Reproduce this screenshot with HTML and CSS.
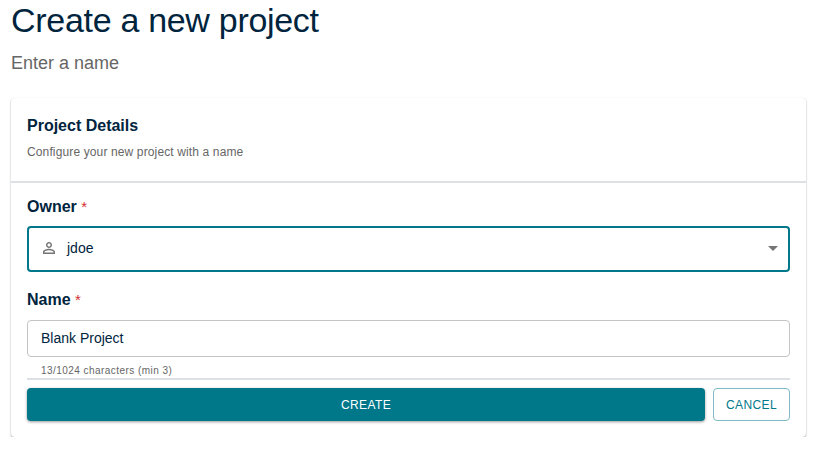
FILE: index.html
```html
<!DOCTYPE html>
<html lang="en">
<head>
    <meta charset="UTF-8">
    <meta name="viewport" content="width=device-width, initial-scale=1.0">
    <title>Create a new project</title>
    <link rel="stylesheet" href="styles.css">
</head>
<body>
    <h1 class="page-title">Create a new project</h1>
    <p class="page-subtitle">Enter a name</p>

    <div class="card">
        <div class="card-header">
            <h2 class="card-title">Project Details</h2>
            <p class="card-subtitle">Configure your new project with a name</p>
        </div>
        <form class="card-body">
            <label class="field-label">Owner <span class="required">*</span></label>
            <div class="select">
                <svg class="select-icon" viewBox="0 0 24 24" width="18" height="18">
                    <path fill="#757575" d="M12 5.9c1.16 0 2.1.94 2.1 2.1s-.94 2.1-2.1 2.1S9.9 9.16 9.9 8s.94-2.1 2.1-2.1m0 9c2.97 0 6.1 1.46 6.1 2.1v1.1H5.9V17c0-.64 3.13-2.1 6.1-2.1M12 4C9.79 4 8 5.79 8 8s1.79 4 4 4 4-1.79 4-4-1.79-4-4-4zm0 9c-2.67 0-8 1.34-8 4v3h16v-3c0-2.66-5.33-4-8-4z"/>
                </svg>
                <span class="select-value">jdoe</span>
                <span class="select-arrow"></span>
            </div>

            <label class="field-label field-label-name">Name <span class="required">*</span></label>
            <input type="text" class="text-input" value="Blank Project">
            <div class="helper">13/1024 characters (min 3)</div>

            <div class="actions">
                <button type="button" class="btn btn-create">CREATE</button>
                <button type="button" class="btn btn-cancel">CANCEL</button>
            </div>
        </form>
    </div>
</body>
</html>
```

FILE: styles.css
```css
* {
    margin: 0;
    padding: 0;
    box-sizing: border-box;
}

body {
    font-family: "Liberation Sans", Arial, sans-serif;
    background: #fff;
    color: #00243d;
    padding: 0 11px;
}

.page-title {
    font-size: 34px;
    font-weight: 400;
    line-height: 40px;
    letter-spacing: -0.3px;
}

.page-subtitle {
    font-size: 18px;
    line-height: 24px;
    margin-top: 11px;
    color: #666;
}

.card {
    margin-top: 23px;
    width: 795px;
    height: 339px;
    border-radius: 4px;
    background: #fff;
    box-shadow: 0 1px 2px rgba(0, 0, 0, 0.35), 0 0 1px rgba(0, 0, 0, 0.06);
}

.card-header {
    height: 85px;
    padding: 18px 16px 0;
    border-bottom: 2px solid #dde1e5;
}

.card-title {
    font-size: 16px;
    line-height: 20px;
    font-weight: 700;
}

.card-subtitle {
    font-size: 12px;
    line-height: 16px;
    letter-spacing: 0.13px;
    margin-top: 8px;
    color: #666;
}

.card-body {
    padding: 14px 16px 0;
}

.field-label {
    display: block;
    font-size: 16px;
    line-height: 20px;
    font-weight: 700;
}

.field-label-name {
    margin-top: 18px;
}

.required {
    font-size: 15px;
    color: #d32f2f;
    font-weight: 400;
}

.select {
    display: flex;
    align-items: center;
    height: 46px;
    margin-top: 9px;
    padding: 0 10px 2px 11px;
    border: 2px solid #00788a;
    border-radius: 4px;
}

.select-icon {
    margin-right: 9px;
}

.select-value {
    font-size: 14px;
    flex: 1;
}

.select-arrow {
    width: 0;
    height: 0;
    border-left: 5px solid transparent;
    border-right: 5px solid transparent;
    border-top: 5px solid #757575;
}

.text-input {
    display: block;
    width: 100%;
    height: 37px;
    margin-top: 10px;
    padding: 0 13px 2px;
    border: 1px solid #c4c4c4;
    border-radius: 4px;
    font-family: inherit;
    font-size: 14px;
    color: #00243d;
    outline: none;
}

.helper {
    font-size: 10px;
    line-height: 12px;
    letter-spacing: 0.45px;
    margin-top: 8px;
    padding-left: 14px;
    color: #666;
}

.actions {
    display: flex;
    gap: 8px;
    margin-top: 1px;
    padding-top: 8px;
    border-top: 2px solid #dde1e5;
}

.btn {
    height: 33px;
    border-radius: 4px;
    font-family: inherit;
    font-size: 12px;
    letter-spacing: 0.4px;
    cursor: pointer;
}

.btn-create {
    flex: 1;
    border: none;
    background: #00788a;
    color: #fff;
    box-shadow: 0 1px 3px rgba(0, 0, 0, 0.4);
}

.btn-cancel {
    width: 77px;
    background: #fff;
    color: #00788a;
    border: 1px solid #7fbbc4;
}
```
